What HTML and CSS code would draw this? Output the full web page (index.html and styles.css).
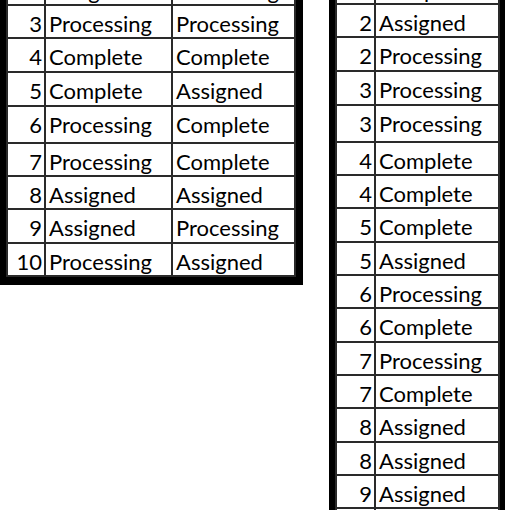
FILE: index.html
```html
<!DOCTYPE html>
<html lang="en">
<head>
<meta charset="utf-8">
<title>Status tables</title>
<link rel="stylesheet" href="styles.css">
</head>
<body>
<div class="page">
  <div class="frame frame-left">
    <table class="sheet sheet-left">
      <colgroup><col class="c-num"><col class="c-a"><col class="c-b"></colgroup>
      <tbody>
        <tr><td class="num">2</td><td>Assigned</td><td>Processing</td></tr>
        <tr><td class="num">3</td><td>Processing</td><td>Processing</td></tr>
        <tr><td class="num">4</td><td>Complete</td><td>Complete</td></tr>
        <tr class="mid"><td class="num">5</td><td>Complete</td><td>Assigned</td></tr>
        <tr class="tall"><td class="num">6</td><td>Processing</td><td>Complete</td></tr>
        <tr><td class="num">7</td><td>Processing</td><td>Complete</td></tr>
        <tr><td class="num">8</td><td>Assigned</td><td>Assigned</td></tr>
        <tr><td class="num">9</td><td>Assigned</td><td>Processing</td></tr>
        <tr><td class="num">10</td><td>Processing</td><td>Assigned</td></tr>
      </tbody>
    </table>
  </div>
  <div class="frame frame-right">
    <table class="sheet sheet-right">
      <colgroup><col class="c-num2"><col class="c-a2"></colgroup>
      <tbody>
        <tr><td class="num">1</td><td>Complete</td></tr>
        <tr><td class="num">2</td><td>Assigned</td></tr>
        <tr><td class="num">2</td><td>Processing</td></tr>
        <tr class="mid"><td class="num">3</td><td>Processing</td></tr>
        <tr class="tall"><td class="num">3</td><td>Processing</td></tr>
        <tr><td class="num">4</td><td>Complete</td></tr>
        <tr><td class="num">4</td><td>Complete</td></tr>
        <tr><td class="num">5</td><td>Complete</td></tr>
        <tr><td class="num">5</td><td>Assigned</td></tr>
        <tr><td class="num">6</td><td>Processing</td></tr>
        <tr><td class="num">6</td><td>Complete</td></tr>
        <tr><td class="num">7</td><td>Processing</td></tr>
        <tr><td class="num">7</td><td>Complete</td></tr>
        <tr><td class="num">8</td><td>Assigned</td></tr>
        <tr><td class="num">8</td><td>Assigned</td></tr>
        <tr><td class="num">9</td><td>Assigned</td></tr>
        <tr><td class="num">9</td><td>Processing</td></tr>
        <tr><td class="num">10</td><td>Processing</td></tr>
      </tbody>
    </table>
  </div>
</div>
</body>
</html>
```
FILE: styles.css
```css
html, body {
  margin: 0;
  padding: 0;
  background: #ffffff;
}
body {
  font-family: Lato, "Liberation Sans", sans-serif;
  font-size: 22px;
  color: #000000;
  overflow: hidden;
  height: 510px;
}
.page {
  display: flex;
  align-items: flex-start;
  gap: 26px;
}
.frame {
  background: #000000;
  border-style: solid;
  border-color: #000000;
}
.frame-left {
  border-width: 6px 7px 8px 6px;
  margin-top: -35.33px;
}
.frame-right {
  border-width: 6px 5px 8px 6px;
  margin-top: -36.33px;
}
.sheet {
  border-collapse: separate;
  border-spacing: 0;
  table-layout: fixed;
  background: #ffffff;
  border-left: 2px solid #2a2a2a;
  border-top: 2px solid #2a2a2a;
}
.sheet-left { width: 290px; }
.sheet-right { width: 165px; }
.c-num { width: 38px; }
.c-a { width: 127px; }
.c-b { width: 123px; }
.c-num2 { width: 39px; }
.c-a2 { width: 124px; }
.sheet tr { height: 33.33px; }
.sheet tr.mid { height: 34.33px; }
.sheet tr.tall { height: 36.67px; }
.sheet td {
  box-sizing: border-box;
  border-right: 2px solid #2a2a2a;
  border-bottom: 2px solid #2a2a2a;
  padding: 5px 3px 0 3px;
  line-height: 26px;
  vertical-align: top;
  white-space: nowrap;
  overflow: hidden;
  text-align: left;
}
.sheet td.num {
  text-align: right;
  padding-right: 2px;
}
```
